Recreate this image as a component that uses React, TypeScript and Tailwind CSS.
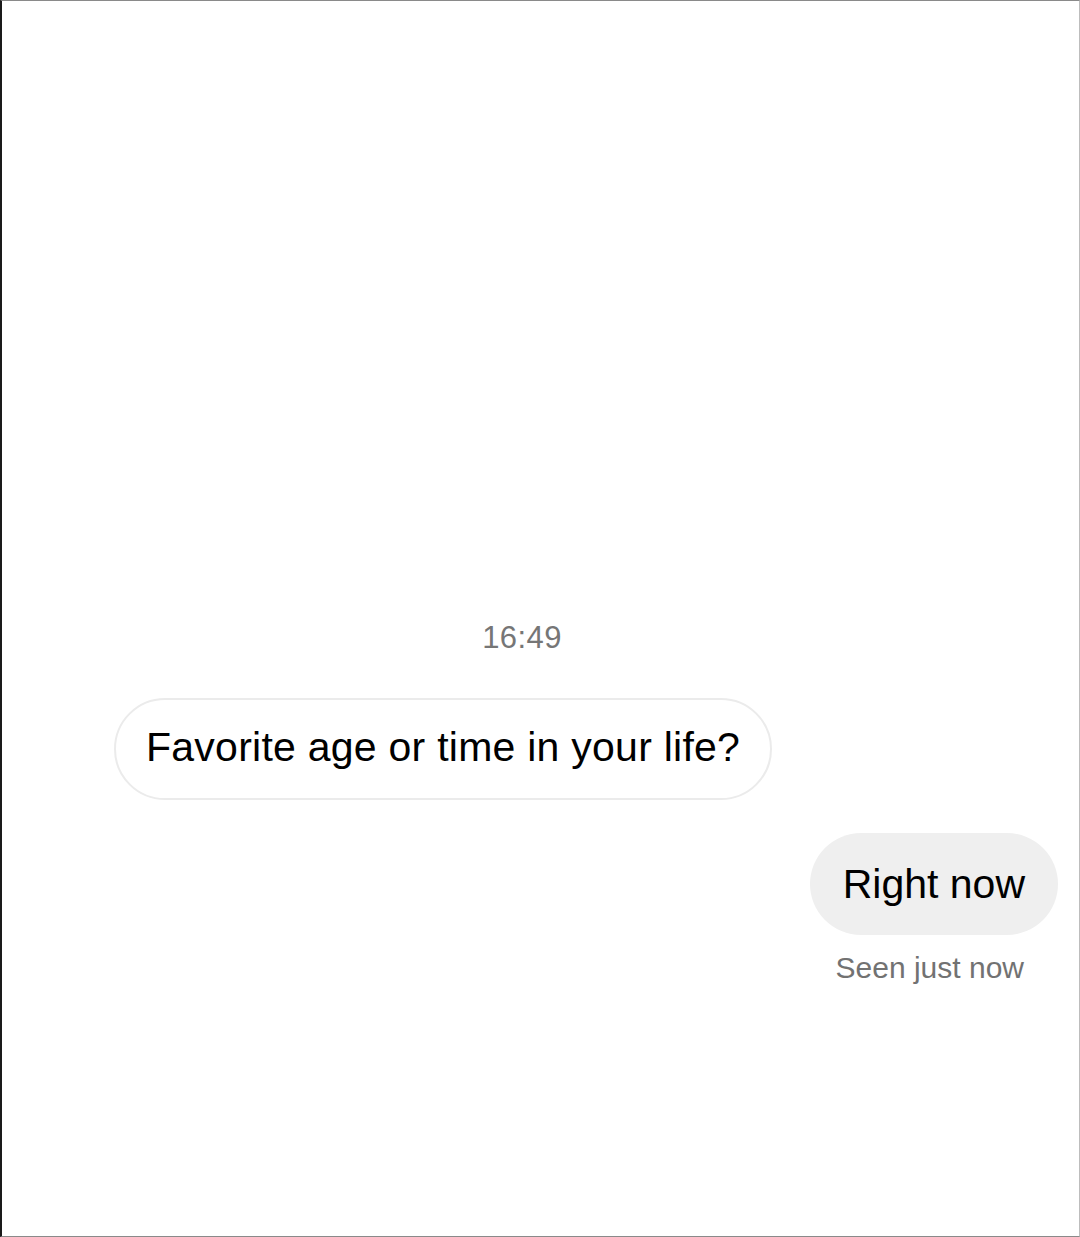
export default function App() {
  return (
    <div
      className="h-[1237px] w-[1080px] overflow-hidden border-l-2 border-t border-r border-b border-l-[#1a1a1a] border-t-[#8a8a8a] border-r-[#bdbdbd] border-b-[#8a8a8a] bg-white"
      style={{ fontFamily: '"Liberation Sans", Arial, sans-serif' }}
    >
      <div className="flex flex-col pt-[619px]">
        <div className="flex justify-center pr-[37px]">
          <span className="text-[31px] leading-[36px] tracking-[0.4px] text-[#767676]">16:49</span>
        </div>

        <div className="mt-[42px] flex pl-[112px]">
          <div className="flex h-[102px] items-center rounded-full border-2 border-[#ebebeb] px-[30px] pb-[3px]">
            <span className="text-[41px] leading-[47px] tracking-[0.25px] text-black">
              Favorite age or time in your life?
            </span>
          </div>
        </div>

        <div className="mt-[33px] flex justify-end pr-[21px]">
          <div className="flex h-[102px] items-center rounded-full bg-[#efefef] px-[33px]">
            <span className="text-[41px] leading-[47px] text-black">Right now</span>
          </div>
        </div>

        <div className="mt-[15px] flex justify-end pr-[55px]">
          <span className="text-[30px] leading-[36px] text-[#727272]">Seen just now</span>
        </div>
      </div>
    </div>
  );
}
